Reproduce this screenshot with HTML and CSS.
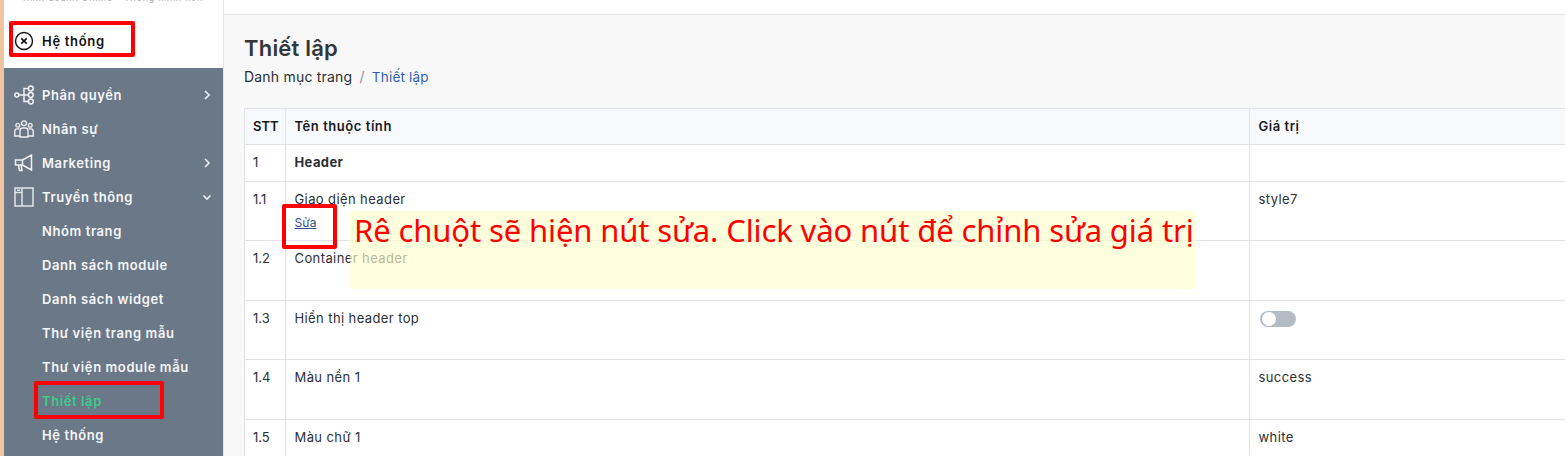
FILE: index.html
```html
<!DOCTYPE html>
<html lang="vi">
  <head>
    <meta charset="UTF-8" />
    <meta name="viewport" content="width=device-width, initial-scale=1.0" />
    <title>Thiết lập</title>
    <link rel="stylesheet" href="styles.css">
  </head>
  <body>
    <div class="strip"></div>

    <nav class="sidebar">
      <div class="brand">
        <p class="slogan">Kinh doanh Online - Thông minh hơn</p>
        <div class="brand-item">
          <svg class="icon" viewBox="0 0 20 20" fill="none" stroke="#111" stroke-width="1.400">
            <circle cx="10" cy="10" r="8.500" />
            <path d="M7.300 7.300l5.400 5.400M12.700 7.300l-5.400 5.400" stroke-width="1.700" />
          </svg>
          <span>Hệ thống</span>
        </div>
      </div>

      <div class="menu">
        <a class="menu-item">
          <svg class="icon" viewBox="0 0 20 20" fill="none" stroke="#f0f2f5" stroke-width="1.500">
            <circle cx="2.800" cy="10" r="2" />
            <circle cx="16.800" cy="3.500" r="2.400" />
            <circle cx="16.800" cy="10" r="2.400" />
            <circle cx="16.800" cy="16.500" r="2.400" />
            <path d="M4.800 10h9.600M10 10V3.500h4.400M10 10v6.500h4.400" />
          </svg>
          <span>Phân quyền</span>
          <svg class="chev" viewBox="0 0 10 10" fill="none" stroke="#f0f2f5" stroke-width="1.600"><path d="M3 1l4 4-4 4" /></svg>
        </a>
        <a class="menu-item">
          <svg class="icon" viewBox="0 0 20 20" fill="none" stroke="#f0f2f5" stroke-width="1.300">
            <circle cx="10" cy="4.200" r="2.400" />
            <circle cx="3.800" cy="6.200" r="1.900" />
            <circle cx="16.200" cy="6.200" r="1.900" />
            <path d="M6 18v-6c0-1.700 1-3 2.500-3h3c1.500 0 2.500 1.300 2.500 3v6zM6 17H.8v-4.500c0-1.500.9-2.700 2.200-2.700h2.400M14 17h5.200v-4.500c0-1.500-.9-2.700-2.200-2.700h-2.400" />
          </svg>
          <span>Nhân sự</span>
        </a>
        <a class="menu-item">
          <svg class="icon" viewBox="0 0 20 20" fill="none" stroke="#f0f2f5" stroke-width="1.500">
            <path d="M1.500 7h7l9-5v15l-9-5h-7zM8.500 7v5M4.500 12l1 5.500h2.500L7.200 12" />
          </svg>
          <span>Marketing</span>
          <svg class="chev" viewBox="0 0 10 10" fill="none" stroke="#f0f2f5" stroke-width="1.600"><path d="M3 1l4 4-4 4" /></svg>
        </a>
        <a class="menu-item">
          <svg class="icon" viewBox="0 0 20 20" fill="none" stroke="#dfe3e8" stroke-width="1.500">
            <rect x="1" y="1" width="18" height="18" />
            <path d="M8 1v18M1 5.500h7M3 3.200h3" />
          </svg>
          <span>Truyền thông</span>
          <svg class="chev" viewBox="0 0 10 10" fill="none" stroke="#f0f2f5" stroke-width="1.600"><path d="M1.500 3.500l3.500 3.500 3.500-3.500" /></svg>
        </a>
        <a class="menu-item sub">Nhóm trang</a>
        <a class="menu-item sub">Danh sách module</a>
        <a class="menu-item sub">Danh sách widget</a>
        <a class="menu-item sub">Thư viện trang mẫu</a>
        <a class="menu-item sub">Thư viện module mẫu</a>
        <a class="menu-item sub active">Thiết lập</a>
        <a class="menu-item sub">Hệ thống</a>
      </div>
    </nav>

    <main>
      <header class="topbar"></header>
      <section class="content">
        <h2>Thiết lập</h2>
        <p class="crumbs">Danh mục trang <i>/</i> <a>Thiết lập</a></p>
        <table>
          <thead>
            <tr class="h-head">
              <th class="c-stt">STT</th>
              <th class="c-name">Tên thuộc tính</th>
              <th class="c-val">Giá trị</th>
            </tr>
          </thead>
          <tbody>
            <tr class="h-group">
              <td>1</td>
              <td><b>Header</b></td>
              <td></td>
            </tr>
            <tr class="h-edit">
              <td>1.1</td>
              <td>Giao diện header<br><a class="edit">Sửa</a></td>
              <td>style7</td>
            </tr>
            <tr class="h-row">
              <td>1.2</td>
              <td>Container header</td>
              <td></td>
            </tr>
            <tr class="h-short">
              <td>1.3</td>
              <td>Hiển thị header top</td>
              <td><span class="switch"></span></td>
            </tr>
            <tr class="h-row">
              <td>1.4</td>
              <td>Màu nền 1</td>
              <td>success</td>
            </tr>
            <tr class="h-row">
              <td>1.5</td>
              <td>Màu chữ 1</td>
              <td>white</td>
            </tr>
          </tbody>
        </table>
      </section>
    </main>

    <!-- Chú thích vẽ đè lên ảnh -->
    <div class="mark mark-system"></div>
    <div class="mark mark-setting"></div>
    <div class="mark mark-edit"></div>
    <div class="note">Rê chuột sẽ hiện nút sửa. Click vào nút để chỉnh sửa giá trị</div>
  </body>
</html>
```

FILE: styles.css
```css
* {
  margin: 0;
  padding: 0;
  box-sizing: border-box;
}

body {
  font-family: Inter, "Noto Sans", sans-serif;
  font-size: 13px;
  color: #2b2f33;
  background-color: #f8f8f8;
  display: flex;
  height: 456px;
  overflow: hidden;
}

.strip {
  width: 4px;
  background-color: #f0c49e;
}

.sidebar {
  width: 220px;
  flex: none;
  background-color: #6b7888;
  border-right: 1px solid #e4e6ea;
}

.brand {
  height: 68px;
  background-color: #fff;
  position: relative;
  overflow: hidden;
}

.slogan {
  font-size: 9px;
  line-height: 10px;
  letter-spacing: 0.7px;
  color: #a9adb5;
  margin-top: -7px;
  padding-left: 19px;
  white-space: nowrap;
}

.brand-item {
  display: flex;
  align-items: center;
  gap: 8px;
  padding: 28px 0 0 10px;
  font-size: 13px;
  font-weight: 600;
  letter-spacing: 0.7px;
  color: #111;
}

.icon {
  width: 20px;
  height: 20px;
  flex: none;
}

.menu {
  padding-top: 10px;
}

.menu-item {
  display: flex;
  align-items: center;
  gap: 8px;
  height: 34px;
  padding: 0 11px 0 10px;
  font-size: 13px;
  font-weight: 600;
  letter-spacing: 0.6px;
  color: #f5f6f8;
}

.menu-item .chev {
  width: 10px;
  height: 10px;
  margin-left: auto;
}

.menu-item.sub {
  padding-left: 38px;
}

.menu-item.active {
  color: #3ecb8a;
}

main {
  flex: 1;
  min-width: 0;
}

.topbar {
  height: 15px;
  background-color: #fff;
  border-bottom: 1px solid #e6e7ea;
}

.content {
  padding: 21px 0 0 20px;
}

h2 {
  font-size: 22px;
  line-height: 24px;
  font-weight: 600;
  letter-spacing: 0.2px;
  color: #33373b;
}

.crumbs {
  font-size: 14px;
  line-height: 18px;
  letter-spacing: 0.2px;
  margin-top: 8px;
  color: #2b2f33;
}

.crumbs i {
  font-style: normal;
  color: #8b9097;
  margin: 0 3px;
}

.crumbs a {
  font-size: 13.5px;
  color: #2f5fb3;
}

table {
  border-collapse: collapse;
  table-layout: fixed;
  width: 1400px;
  margin-top: 22px;
  background-color: #fff;
}

th,
td {
  border: 1px solid #e1e3e8;
  padding: 0 8.500px;
  text-align: left;
  vertical-align: top;
  line-height: 18px;
  letter-spacing: 0.4px;
}

th {
  background-color: #f8f9fd;
  font-weight: 600;
  letter-spacing: 0.55px;
  color: #16191d;
  vertical-align: middle;
  padding-bottom: 2px;
}

.c-stt {
  width: 41px;
  letter-spacing: 0;
}

th.c-stt,
td:first-child {
  padding-left: 8px;
  padding-right: 0;
}

td:first-child {
  letter-spacing: 0;
}

.c-name {
  width: 964px;
}

.h-head {
  height: 36px;
}

.h-group {
  height: 37px;
}

.h-edit {
  height: 59px;
}

.h-row {
  height: 60px;
}

.h-short {
  height: 59px;
}

td {
  padding-top: 8px;
}

.edit {
  display: block;
  font-size: 12px;
  letter-spacing: 0;
  margin-top: 6px;
  color: #2f4f8f;
  text-decoration: underline;
}

.switch {
  display: block;
  position: relative;
  width: 36px;
  height: 16px;
  margin: 2px 0 0 1.500px;
  border-radius: 8px;
  background-color: #b3bbc4;
}

.switch::before {
  content: "";
  position: absolute;
  top: 1px;
  left: 2px;
  width: 14px;
  height: 14px;
  border-radius: 50%;
  background-color: #fff;
}

.mark {
  position: absolute;
  border: 4px solid #f00;
  border-radius: 2px;
}

.mark-system {
  left: 9px;
  top: 21px;
  width: 126px;
  height: 36px;
}

.mark-setting {
  left: 34px;
  top: 381px;
  width: 130px;
  height: 38px;
}

.mark-edit {
  left: 282px;
  top: 204px;
  width: 55px;
  height: 45px;
}

.note {
  position: absolute;
  left: 350px;
  top: 211px;
  width: 846px;
  height: 78px;
  padding-left: 4px;
  font-family: "Noto Sans", sans-serif;
  font-size: 31px;
  letter-spacing: -0.12px;
  line-height: 38px;
  color: #f00;
  background-color: rgba(255, 255, 205, 0.65);
  white-space: nowrap;
}
```
